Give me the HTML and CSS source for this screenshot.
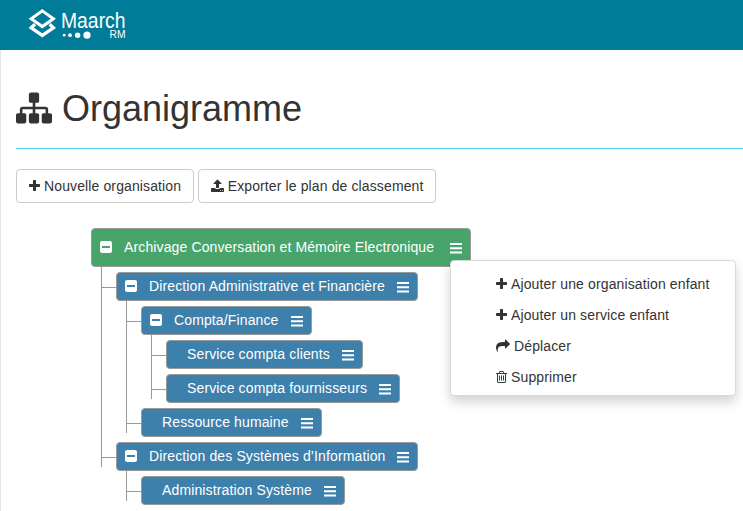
FILE: index.html
```html
<!DOCTYPE html>
<html lang="fr">
<head>
<meta charset="utf-8">
<title>Organigramme</title>
<link rel="stylesheet" href="styles.css">
</head>
<body>
<svg class="sprite" aria-hidden="true">
  <symbol id="plus" viewBox="192 0 1408 1792"><path d="M1600 736v192q0 40-28 68t-68 28h-416v416q0 40-28 68t-68 28h-192q-40 0-68-28t-28-68v-416h-416q-40 0-68-28t-28-68v-192q0-40 28-68t68-28h416v-416q0-40 28-68t68-28h192q40 0 68 28t28 68v416h416q40 0 68 28t28 68z"/></symbol>
  <symbol id="bars" viewBox="0 0 12 11"><path d="M0 0h12v2H0zM0 4.300h12v2H0zM0 8.600h12v2H0z"/></symbol>
  <symbol id="minus" viewBox="0 0 12 12"><path fill-rule="evenodd" d="M2 0h8a2 2 0 0 1 2 2v8a2 2 0 0 1-2 2H2a2 2 0 0 1-2-2V2a2 2 0 0 1 2-2zM2 5.100v1.800h8V5.100z"/></symbol>
</svg>
<header class="navbar">
  <svg class="logo" width="100" height="36" viewBox="28 6 100 36">
    <g fill="none" stroke="#fff" stroke-width="3">
      <path d="M42.300 10.900 53.400 18.800 42.300 26.600 31.200 18.800z"/>
      <path d="M35 24.300 31.200 27.800 42.300 35.400 53.400 27.800 49.600 24.300" stroke-width="3.300"/>
    </g>
    <g fill="#fff">
      <circle cx="64.200" cy="35.200" r="1.400"/><circle cx="70" cy="35.200" r="1.900"/><circle cx="77.600" cy="35.200" r="2.700"/><circle cx="87" cy="35.200" r="3.600"/>
      <text class="brand" x="61" y="27.500" textLength="64.500" lengthAdjust="spacingAndGlyphs">Maarch</text>
      <text class="edition" x="109.500" y="38.300" textLength="16" lengthAdjust="spacingAndGlyphs">RM</text>
    </g>
  </svg>
</header>
<main class="page">
  <h1 class="title">
    <svg class="sitemap" viewBox="0 0 1792 1792"><path d="M1792 1248v320q0 40-28 68t-68 28h-320q-40 0-68-28t-28-68v-320q0-40 28-68t68-28h96v-192h-512v192h96q40 0 68 28t28 68v320q0 40-28 68t-68 28h-320q-40 0-68-28t-28-68v-320q0-40 28-68t68-28h96v-192h-512v192h96q40 0 68 28t28 68v320q0 40-28 68t-68 28h-320q-40 0-68-28t-28-68v-320q0-40 28-68t68-28h96v-192q0-52 38-90t90-38h512v-192h-96q-40 0-68-28t-28-68v-320q0-40 28-68t68-28h320q40 0 68 28t28 68v320q0 40-28 68t-68 28h-96v192h512q52 0 90 38t38 90v192h96q40 0 68 28t28 68z"/></svg>
    <span>Organigramme</span>
  </h1>
  <div class="toolbar">
    <button class="btn"><svg class="i11"><use href="#plus"/></svg><span>Nouvelle organisation</span></button>
    <button class="btn"><svg class="i13" viewBox="64 0 1664 1792"><path d="M1344 1472q0-26-19-45t-45-19-45 19-19 45 19 45 45 19 45-19 19-45zm256 0q0-26-19-45t-45-19-45 19-19 45 19 45 45 19 45-19 19-45zm128-224v320q0 40-28 68t-68 28h-1472q-40 0-68-28t-28-68v-320q0-40 28-68t68-28h427q21 56 70.5 92t110.5 36h256q61 0 110.5-36t70.5-92h427q40 0 68 28t28 68zm-325-648q-17 40-59 40h-256v448q0 26-19 45t-45 19h-256q-26 0-45-19t-19-45v-448h-256q-42 0-59-40-17-39 14-69l448-448q18-19 45-19t45 19l448 448q31 30 14 69z"/></svg><span>Exporter le plan de classement</span></button>
  </div>
  <div class="tree">
    <div class="node root"><svg class="toggle"><use href="#minus"/></svg><span>Archivage Conversation et Mémoire Electronique</span><svg class="bars"><use href="#bars"/></svg>
      <ul class="menu">
        <li><svg class="i11"><use href="#plus"/></svg><span>Ajouter une organisation enfant</span></li>
        <li><svg class="i11"><use href="#plus"/></svg><span>Ajouter un service enfant</span></li>
        <li><svg class="i14" viewBox="0 0 1792 1792"><path d="M1792 640q0 26-19 45l-512 512q-19 19-45 19t-45-19-19-45v-256h-224q-98 0-175.5 6t-154 21.5-133 42.5-105.5 69.5-80 101-48.5 138.5-17.5 181q0 55 5 123 0 6 2.500 23.500t2.500 26.500q0 15-8.500 25t-23.500 10q-16 0-28-17-7-9-13-22t-13.500-30-10.500-24q-127-285-127-451 0-199 53-333 162-403 875-403h224v-256q0-26 19-45t45-19 45 19l512 512q19 19 19 45z"/></svg><span>Déplacer</span></li>
        <li><svg class="i11 trash" viewBox="192 0 1408 1792"><path d="M704 736v576q0 14-9 23t-23 9h-64q-14 0-23-9t-9-23v-576q0-14 9-23t23-9h64q14 0 23 9t9 23zm256 0v576q0 14-9 23t-23 9h-64q-14 0-23-9t-9-23v-576q0-14 9-23t23-9h64q14 0 23 9t9 23zm256 0v576q0 14-9 23t-23 9h-64q-14 0-23-9t-9-23v-576q0-14 9-23t23-9h64q14 0 23 9t9 23zm128 724v-948h-896v948q0 22 7 40.500t14.500 27 10.500 8.500h832q3 0 10.500-8.500t14.500-27 7-40.500zm-672-1076h448l-48-117q-7-9-17-11h-317q-10 2-17 11zm928 32v64q0 14-9 23t-23 9h-96v948q0 83-47 143.500t-113 60.500h-832q-66 0-113-58.500t-47-141.500v-952h-96q-14 0-23-9t-9-23v-64q0-14 9-23t23-9h309l70-167q15-37 54-63t79-26h320q40 0 79 26t54 63l70 167h309q14 0 23 9t9 23z"/></svg><span>Supprimer</span></li>
      </ul>
    </div>
    <ul class="branch">
      <li>
        <div class="node"><svg class="toggle"><use href="#minus"/></svg><span>Direction Administrative et Financière</span><svg class="bars"><use href="#bars"/></svg></div>
        <ul class="branch">
          <li>
            <div class="node"><svg class="toggle"><use href="#minus"/></svg><span>Compta/Finance</span><svg class="bars"><use href="#bars"/></svg></div>
            <ul class="branch">
              <li><div class="node leaf"><span>Service compta clients</span><svg class="bars"><use href="#bars"/></svg></div></li>
              <li><div class="node leaf"><span>Service compta fournisseurs</span><svg class="bars"><use href="#bars"/></svg></div></li>
            </ul>
          </li>
          <li><div class="node leaf"><span>Ressource humaine</span><svg class="bars"><use href="#bars"/></svg></div></li>
        </ul>
      </li>
      <li>
        <div class="node"><svg class="toggle"><use href="#minus"/></svg><span>Direction des Systèmes d’Information</span><svg class="bars"><use href="#bars"/></svg></div>
        <ul class="branch">
          <li><div class="node leaf"><span>Administration Système</span><svg class="bars"><use href="#bars"/></svg></div></li>
        </ul>
      </li>
    </ul>
  </div>
</main>
</body>
</html>
```
FILE: styles.css
```css
* { box-sizing: border-box; }
body {
  margin: 0;
  height: 511px;
  overflow: hidden;
  background: #fff;
  color: #333;
  font: 14px/20px "Liberation Sans", Arial, sans-serif;
}
svg { display: block; flex: none; fill: currentColor; }
ul { list-style: none; margin: 0; padding: 0; }
.sprite { position: absolute; width: 0; height: 0; }

.navbar { height: 50px; padding: 6px 28px; background: #007b98; }
.logo { overflow: visible; }
.brand { font-size: 22px; }
.edition { font-size: 10px; }

.page { height: 461px; border-left: 1px solid #e7e7e7; padding-left: 15px; }
.title {
  display: flex;
  gap: 10px;
  height: 99px;
  margin: 0 0 20px;
  padding-top: 39px;
  border-bottom: 1px solid #4fd6f7;
  font-size: 36px;
  font-weight: 400;
  line-height: 40px;
}
.sitemap { width: 36px; height: 36px; margin-top: 1px; }

.toolbar { display: flex; gap: 4px; margin-bottom: 25px; }
.btn {
  display: flex;
  align-items: center;
  gap: 4px;
  height: 34px;
  padding: 0 12px;
  border: 1px solid #ccc;
  border-radius: 4px;
  background: #fff;
  color: #333;
  font: inherit;
  letter-spacing: .12px;
  white-space: nowrap;
}
.btn span { margin-right: -.5px; }
.i11 { width: 11px; height: 14px; }
.i13 { width: 13px; height: 14px; }
.i14 { width: 14px; height: 14px; }

.tree { padding-left: 75px; letter-spacing: .128px; }
.node {
  display: flex;
  align-items: center;
  position: relative;
  width: max-content;
  height: 29px;
  padding: 0 8px 2px;
  border: 1px solid #999;
  border-radius: 4px;
  background: #3e80ac;
  color: #fff;
  white-space: nowrap;
}
.root { height: 39px; background: #47a56b; }
.leaf { padding-left: 20px; }
.toggle { width: 12px; height: 12px; margin-right: 12px; }
.bars { width: 12px; height: 11px; margin: 3px 0 0 12px; }
.root > .bars { margin-left: 16px; }

.branch { padding-left: 25px; }
.branch > li { position: relative; padding-top: 5px; }
.branch > li::before {
  content: "";
  position: absolute;
  left: -15px;
  top: 0;
  bottom: 0;
  border-left: 1px solid #999;
}
.branch > li:last-child::before { bottom: auto; height: 30px; }
.branch > li::after {
  content: "";
  position: absolute;
  left: -15px;
  top: 20px;
  width: 15px;
  border-top: 1px solid #999;
}

.menu {
  position: absolute;
  z-index: 2;
  left: 358px;
  top: 31px;
  width: 286px;
  height: 136px;
  padding: 7px 0 0 45px;
  border: 1px solid #d9d9d9;
  border-radius: 4px;
  background: #fff;
  color: #333;
  box-shadow: 0 6px 12px rgba(0, 0, 0, .175);
}
.menu li { display: flex; align-items: center; gap: 4px; height: 31px; }
.trash { color: #25452f; }
```
